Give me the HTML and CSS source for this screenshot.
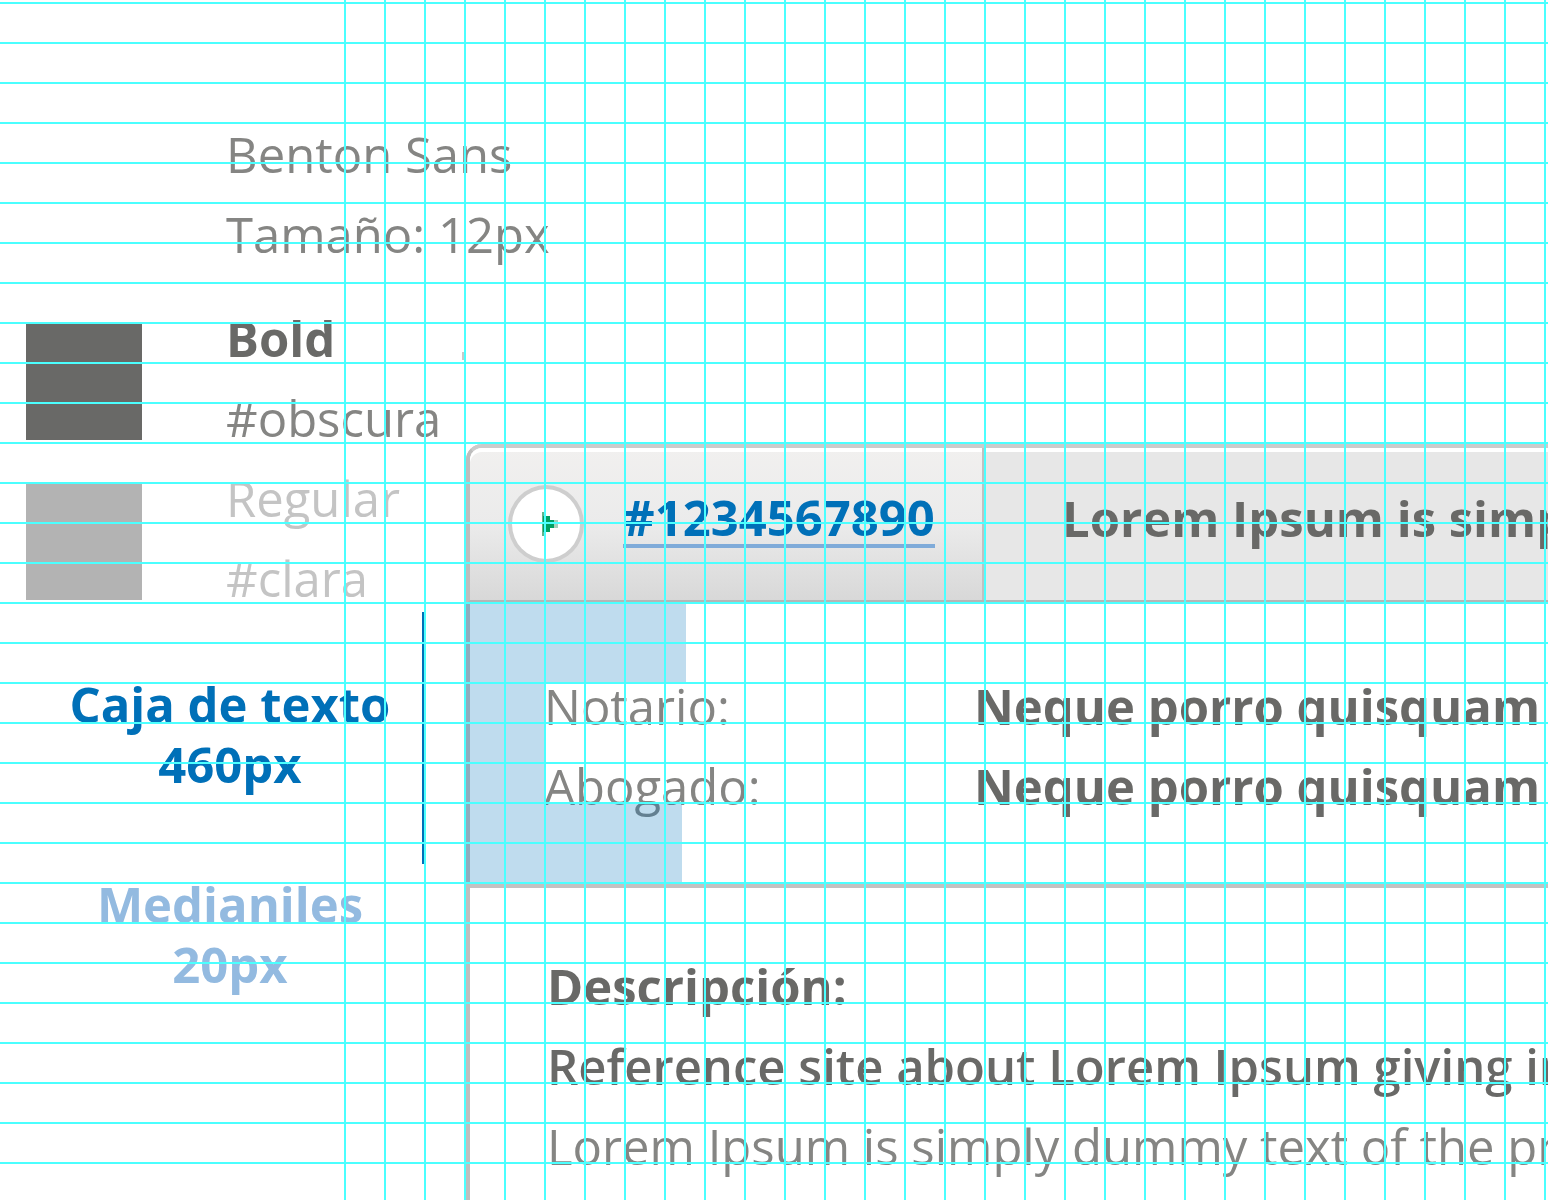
FILE: index.html
```html
<!DOCTYPE html>
<html lang="es">
<head>
<meta charset="utf-8">
<meta name="viewport" content="width=device-width, initial-scale=1">
<title>Caja de texto</title>
<link rel="stylesheet" href="styles.css">
</head>
<body>
<div class="sheet">
  <aside class="specs">
    <div class="font-spec">
      <p>Benton Sans</p>
      <p>Tamaño: 12px</p>
    </div>
    <ul class="swatches">
      <li class="swatch">
        <span class="chip chip-dark"></span>
        <div class="swatch-text"><p class="bold">Bold</p><p>#obscura</p></div>
      </li>
      <li class="swatch swatch-light">
        <span class="chip chip-light"></span>
        <div class="swatch-text"><p>Regular</p><p>#clara</p></div>
      </li>
    </ul>
    <p class="measure measure-box">Caja de texto<br>460px</p>
    <p class="measure measure-gutter">Medianiles<br>20px</p>
  </aside>
  <main class="card">
    <header class="card-head">
      <div class="tab">
        <button class="play" type="button" aria-label="Abrir">
          <svg viewBox="0 0 16 24" width="16" height="24" aria-hidden="true"><path d="M0 0 H4 V24 H0 Z" fill="#5fb48e"/><path d="M12 8 H16 V16 H12 Z M4 20 H8 V16 H4 Z" fill="#a5cfbb"/><path d="M1 4 H8 V8 H12 V16 H8 V20 H1 Z" fill="#00a063"/></svg>
        </button>
        <a class="number" href="#1234567890">#1234567890</a>
      </div>
      <h1 class="title">Lorem Ipsum is simp</h1>
    </header>
    <section class="people">
      <dl class="fields">
        <dt>Notario:</dt><dd>Neque porro quisquam</dd>
        <dt>Abogado:</dt><dd>Neque porro quisquam</dd>
      </dl>
    </section>
    <section class="description">
      <h2>Descripción:</h2>
      <p class="lead">Reference site about Lorem Ipsum giving in</p>
      <p class="copy">Lorem Ipsum is simply dummy text of the pr</p>
    </section>
  </main>
</div>
</body>
</html>
```
FILE: styles.css
```css
* {
  box-sizing: border-box;
  margin: 0;
  padding: 0;
}

body {
  background: #fff;
  color: #696967;
  font-family: "Open Sans", "Noto Sans", sans-serif;
  font-size: 49px;
  font-weight: 400;
  line-height: 80px;
  overflow: hidden;
}

/* Cyan layout guides over the whole sheet */
body::after {
  content: "";
  position: fixed;
  inset: 0;
  pointer-events: none;
  background:
    repeating-linear-gradient(transparent 0 2px, #4bffff 2px 4px, transparent 4px 40px),
    repeating-linear-gradient(90deg, #4bffff 0 2px, transparent 2px 40px) 344px 0 no-repeat;
}

.sheet {
  display: grid;
  grid-template-columns: 466px minmax(0, 1fr);
  min-height: 100vh;
}

.specs {
  padding-top: 114px;
  position: relative;
}

/* Stray tick beside the card's column */
.specs::after {
  content: "";
  position: absolute;
  right: 2px;
  top: 352px;
  width: 2px;
  height: 8px;
  background: #c8c8c8;
}

.font-spec {
  padding-left: 226px;
  margin-bottom: 24px;
  color: #858583;
  white-space: nowrap;
}

.swatches {
  list-style: none;
}

.swatch {
  display: flex;
  align-items: flex-start;
  gap: 84px;
  padding-left: 26px;
  color: #858583;
}

.chip {
  flex: none;
  width: 116px;
  height: 116px;
  margin-top: 26px;
}

.chip-dark {
  background: #696967;
}

.chip-light {
  background: #b3b3b3;
}

.swatch-light {
  color: #c4c4c4;
}

.bold {
  color: #696967;
  font-weight: 700;
}

.measure {
  width: 460px;
  text-align: center;
  font-weight: 700;
  line-height: 60px;
}

.measure-box {
  position: relative;
  margin: 56px 0 80px;
  color: #0070b8;
}

.measure-box::after {
  content: "";
  position: absolute;
  right: 36px;
  top: -62px;
  width: 2px;
  height: 252px;
  background: #0070b8;
}

.measure-gutter {
  color: #93bae0;
}

.card {
  margin-top: 444px;
  border-left: 4px solid #c0bebe;
  border-top-left-radius: 16px;
}

.card-head {
  display: flex;
  height: 160px;
  margin-left: -4px;
  border: solid #cbcbcb;
  border-width: 4px 0 4px 4px;
  border-bottom-color: #b5b5b5;
  border-left-color: #bdbdbd;
  border-top-left-radius: 16px;
  background: #e7e7e7;
  box-shadow: inset 0 4px #fff;
}

.tab {
  display: flex;
  align-items: center;
  gap: 39px;
  width: 516px;
  flex: none;
  padding-left: 38px;
  border-right: 4px solid #c0c0c0;
  border-top-left-radius: 12px;
  background: linear-gradient(#f1f0ef, #ebebeb 50%, #d8d8d8);
  box-shadow: inset 0 4px #fff;
}

.play {
  display: flex;
  align-items: center;
  justify-content: center;
  width: 76px;
  height: 78px;
  border: 4px solid #cecece;
  border-radius: 50%;
  background: #fff;
  padding-left: 8px;
}

.number {
  margin-bottom: 10px;
  border-bottom: 4px solid #7fabd9;
  color: #0070b8;
  font-weight: 700;
  line-height: 53px;
  text-decoration: none;
}

.title {
  padding: 30px 0 0 76px;
  font-size: 49px;
  font-weight: 700;
  white-space: nowrap;
}

.people {
  position: relative;
  padding: 62px 0 58px 74px;
  border-bottom: 4px solid #c3c1c1;
}

/* Translucent gutter marking around the text box */
.people::after {
  content: "";
  position: absolute;
  left: -4px;
  top: 0;
  width: 220px;
  height: 280px;
  background: rgba(0, 114, 188, 0.25);
  clip-path: polygon(0 0, 220px 0, 220px 79px, 80px 79px, 80px 199px, 216px 199px, 216px 280px, 0 280px);
}

.fields {
  display: grid;
  grid-template-columns: 430px minmax(0, 1fr);
  white-space: nowrap;
}

.fields dt {
  color: #858583;
}

.fields dd {
  font-weight: 700;
}

.description {
  padding: 58px 0 0 77px;
  white-space: nowrap;
}

.description h2 {
  font-size: 49px;
  font-weight: 700;
}

.lead {
  font-weight: 600;
}

.copy {
  color: #858583;
}
```
